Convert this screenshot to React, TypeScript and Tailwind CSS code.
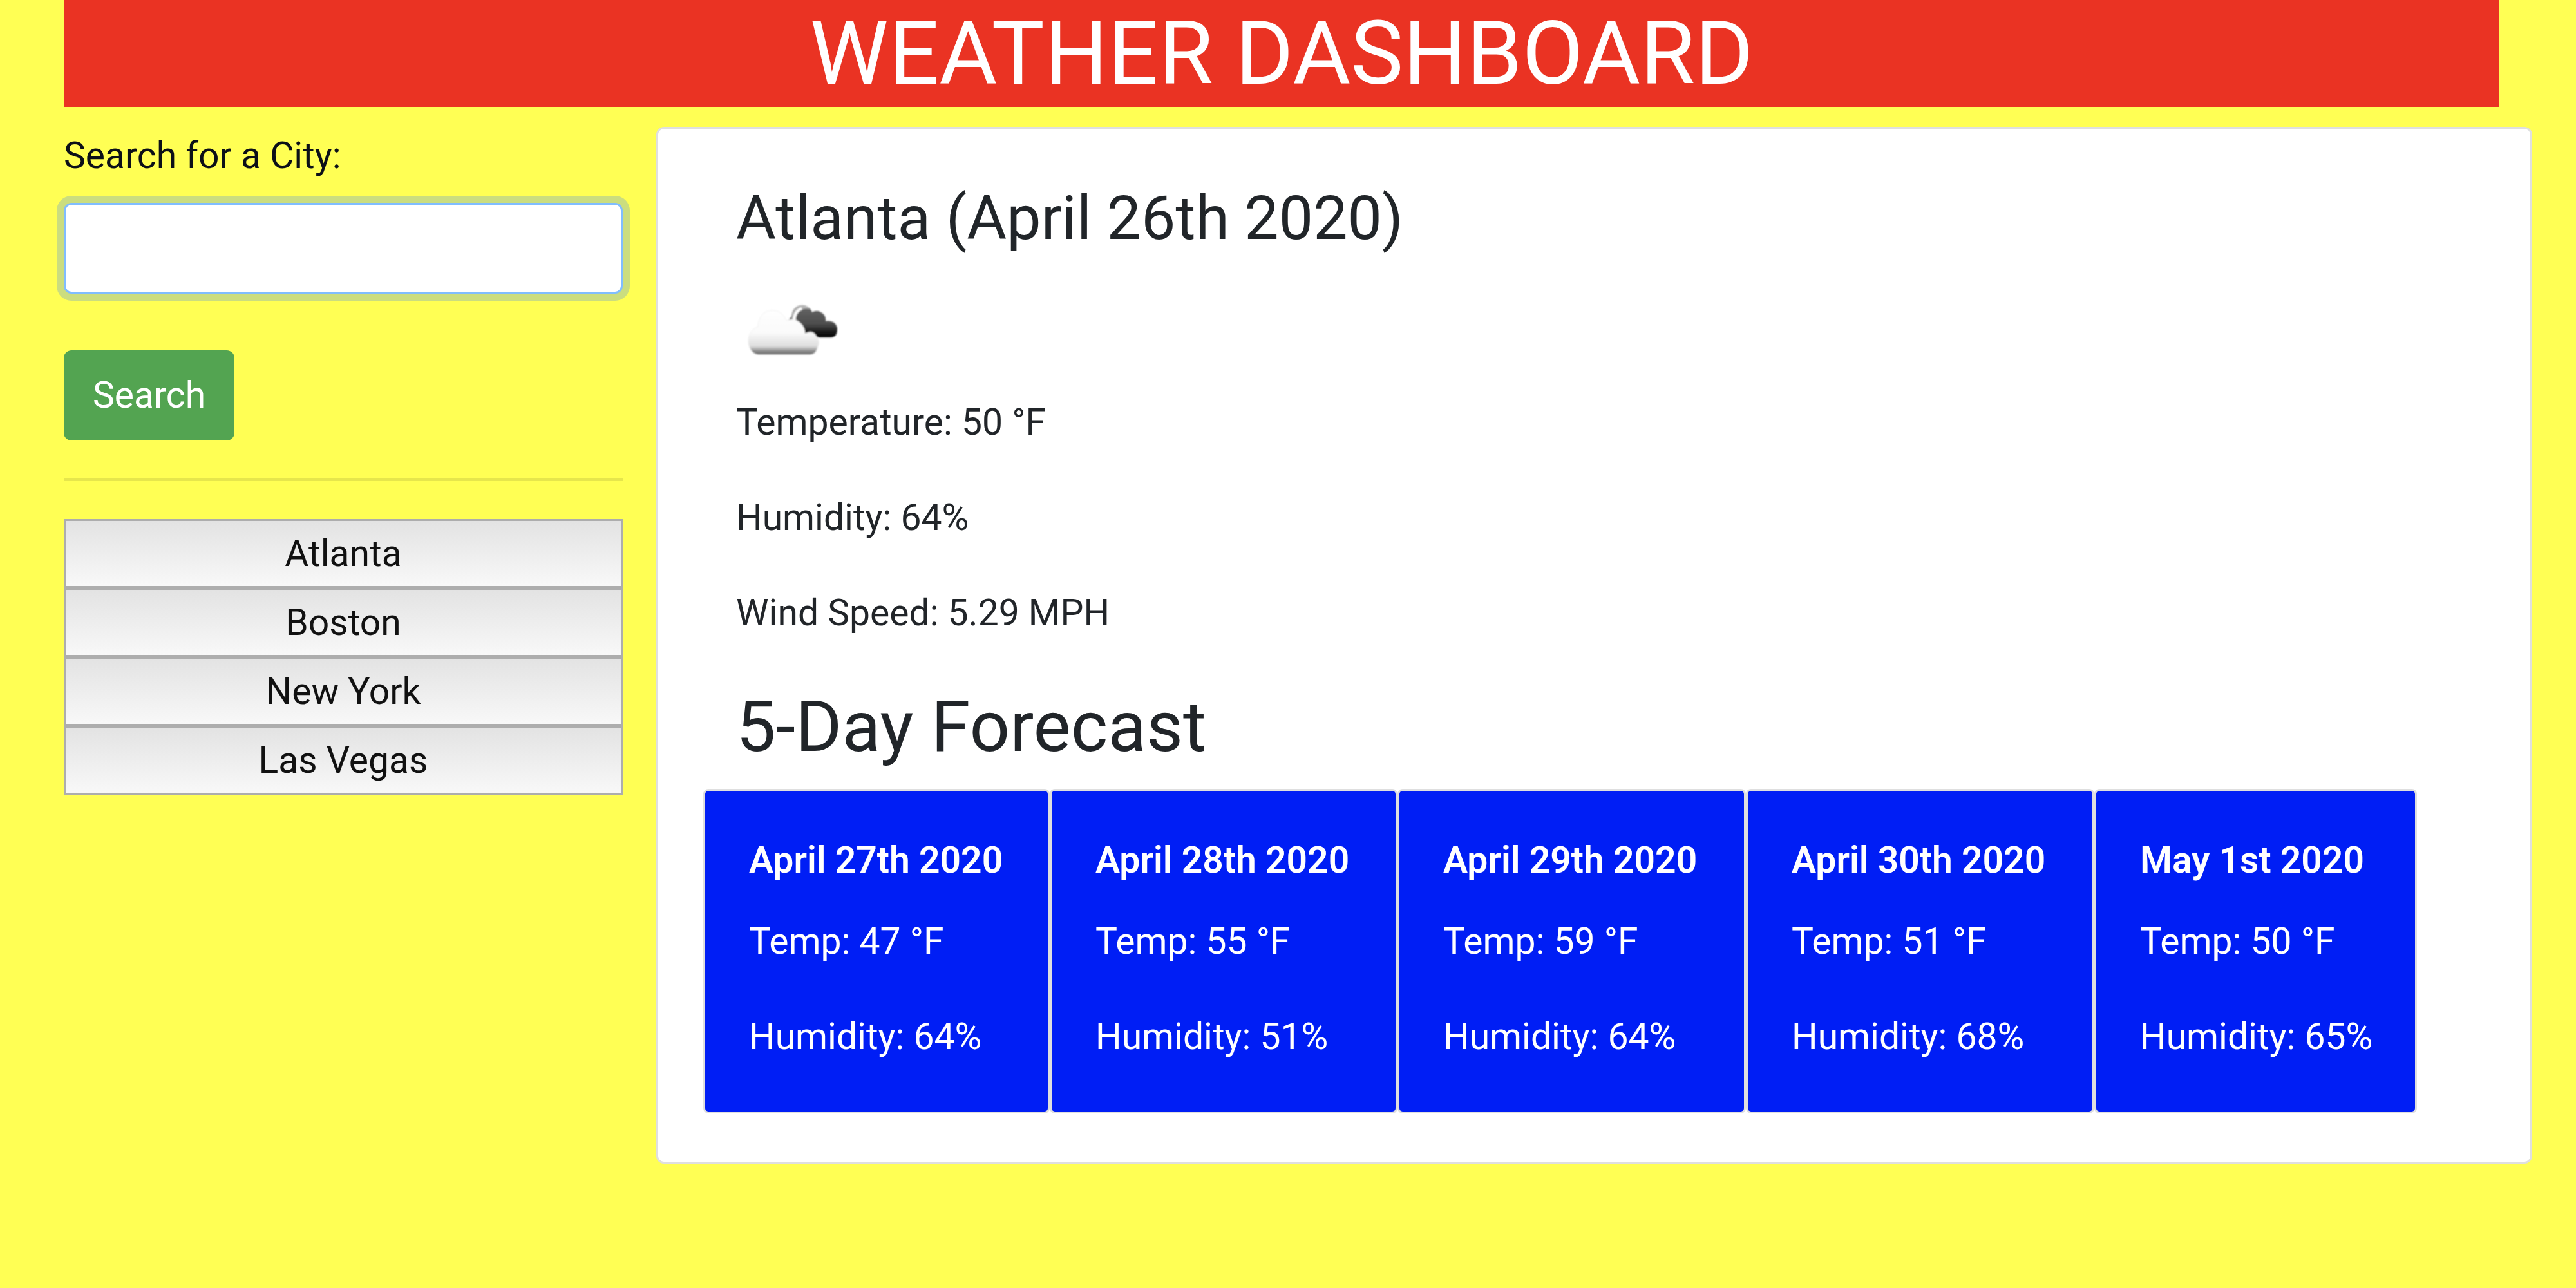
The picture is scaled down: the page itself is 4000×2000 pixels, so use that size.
import React from "react";

const cities = ["Atlanta", "Boston", "New York", "Las Vegas"];

const forecast = [
  { date: "April 27th 2020", temp: 47, humidity: 64 },
  { date: "April 28th 2020", temp: 55, humidity: 51 },
  { date: "April 29th 2020", temp: 59, humidity: 64 },
  { date: "April 30th 2020", temp: 51, humidity: 68 },
  { date: "May 1st 2020", temp: 50, humidity: 65 },
];

function BrokenClouds() {
  return (
    <svg
      viewBox="0 0 160 140"
      role="img"
      aria-label="Broken clouds"
      className="mt-10 mb-[30px] ml-[51px] block h-[140px] w-[160px]"
    >
      <defs>
        <linearGradient id="dark" x1="0" y1="30" x2="0" y2="84" gradientUnits="userSpaceOnUse">
          <stop offset="0" stopColor="#6a6a6a" />
          <stop offset="0.6" stopColor="#4c4c4c" />
          <stop offset="0.92" stopColor="#050505" />
          <stop offset="1" stopColor="#222222" />
        </linearGradient>
        <linearGradient id="light" x1="0" y1="40" x2="0" y2="111" gradientUnits="userSpaceOnUse">
          <stop offset="0" stopColor="#ffffff" />
          <stop offset="0.5" stopColor="#fafafa" />
          <stop offset="0.8" stopColor="#dddddd" />
          <stop offset="0.92" stopColor="#808080" />
          <stop offset="0.97" stopColor="#777777" />
          <stop offset="1" stopColor="#b5b5b5" />
        </linearGradient>
        <filter id="soft" x="-10%" y="-10%" width="120%" height="120%">
          <feGaussianBlur stdDeviation="1" />
        </filter>
      </defs>
      <g filter="url(#soft)">
        <path
          d="M78 58 Q86 54 87 46 A16 16 0 0 1 118 44 A14 14 0 0 1 139 58 C150 56 157 62 157 70 C157 78 154 83 147 83 L124 83 L98 74 Z"
          fill="url(#dark)"
        />
        <path
          d="M86 54 Q88 36 100 33 Q110 32 115 39 Q104 37 98 42 Q94 46 93 54 L96 60 L84 62 Z"
          fill="#b4b4b4"
        />
        <path d="M90 56 Q91 42 102 38" fill="none" stroke="#ffffff" strokeWidth="4" />
        <path
          d="M34 110 C24 108 19 98 19 89 C19 78 25 69 34 66 C35 50 44 41 56 41 C67 41 74 47 78 57 C92 52 106 60 107 77 C118 72 122 76 125 82 C129 86 129 92 127 97 C125 105 122 109 115 110 Z"
          fill="url(#light)"
          stroke="#efefef"
          strokeWidth="1"
        />
      </g>
    </svg>
  );
}

export default function App() {
  return (
    <div className="min-h-screen bg-[#ffff54] pr-[68px] pl-[99px] font-[Roboto,sans-serif] text-[57px] leading-[90px] text-[#212529]">
      <header className="mr-[51px] bg-[#ea3323] text-center text-white">
        <h1 className="text-[138px] leading-[166px]">WEATHER DASHBOARD</h1>
      </header>

      <div className="mt-[31px] grid grid-cols-[minmax(0,868fr)_minmax(0,2913fr)] items-start gap-[52px]">
        <aside>
          <form onSubmit={(e) => e.preventDefault()}>
            <label htmlFor="city" className="mb-7 block text-[#0c1018]">
              Search for a City:
            </label>
            <input
              id="city"
              type="text"
              className="block h-[141px] w-full rounded-xl border-[3px] border-[#80bdff] bg-white px-10 ring-[11px] ring-[#cbdd7f] outline-none"
            />
            <button
              type="submit"
              className="mt-[88px] block rounded-xl bg-[#53a451] px-[45px] py-[25px] text-white"
            >
              Search
            </button>
          </form>
          <hr className="my-[59px] border-t-4 border-[#e6e64c]" />
          <ul>
            {cities.map((city) => (
              <li key={city}>
                <button
                  type="button"
                  className="block h-[107px] w-full border-[3px] border-[#adadad] bg-linear-to-b from-[#e3e3e3] to-[#f8f8f8] text-center text-[#111111]"
                >
                  {city}
                </button>
              </li>
            ))}
          </ul>
        </aside>

        <main className="rounded-xl border-[3px] border-[#dfdfdf] bg-white pt-[77px] pr-[176px] pb-[75px] pl-[70px]">
          <section>
            <h2 className="pl-[51px] text-[95px] leading-[124px]">Atlanta (April 26th 2020)</h2>
            <BrokenClouds />
            <div className="flex flex-col gap-[58px] pl-[51px]">
              <p>Temperature: 50 °F</p>
              <p>Humidity: 64%</p>
              <p>Wind Speed: 5.29 MPH</p>
            </div>
          </section>
          <section>
            <h2 className="mt-[62px] mb-[26px] pl-[51px] text-[110px] leading-[140px]">
              5-Day Forecast
            </h2>
            <div className="grid grid-cols-[minmax(0,538fr)_minmax(0,540fr)_minmax(0,541fr)_minmax(0,541fr)_minmax(0,501fr)]">
              {forecast.map((day) => (
                <article
                  key={day.date}
                  className="rounded-lg border-[3px] border-[#dfdfdf] bg-[#001ef5] px-[68px] pt-[63px] pb-[71px] whitespace-nowrap text-white"
                >
                  <h3 className="mb-9 font-semibold">{day.date}</h3>
                  <p className="mb-[58px]">Temp: {day.temp} °F</p>
                  <p>Humidity: {day.humidity}%</p>
                </article>
              ))}
            </div>
          </section>
        </main>
      </div>
    </div>
  );
}
